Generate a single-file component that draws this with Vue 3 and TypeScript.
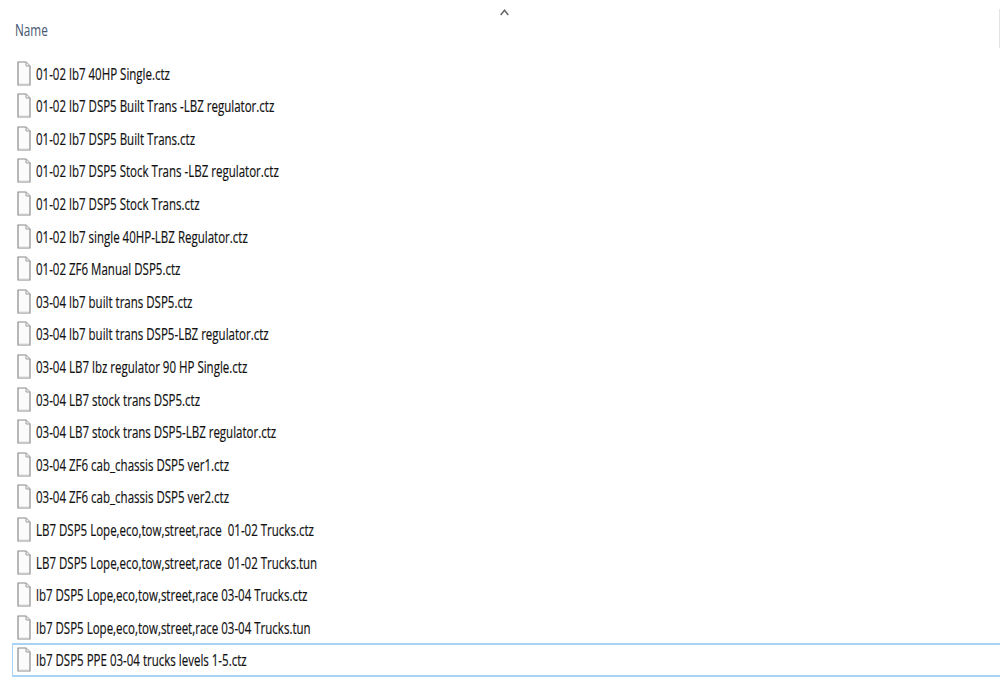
<script setup lang="ts">
const files: string[] = [
  '01-02 lb7 40HP Single.ctz',
  '01-02 lb7 DSP5 Built Trans -LBZ regulator.ctz',
  '01-02 lb7 DSP5 Built Trans.ctz',
  '01-02 lb7 DSP5 Stock Trans -LBZ regulator.ctz',
  '01-02 lb7 DSP5 Stock Trans.ctz',
  '01-02 lb7 single 40HP-LBZ Regulator.ctz',
  '01-02 ZF6 Manual DSP5.ctz',
  '03-04 lb7 built trans DSP5.ctz',
  '03-04 lb7 built trans DSP5-LBZ regulator.ctz',
  '03-04 LB7 lbz regulator 90 HP Single.ctz',
  '03-04 LB7 stock trans DSP5.ctz',
  '03-04 LB7 stock trans DSP5-LBZ regulator.ctz',
  '03-04 ZF6 cab_chassis DSP5 ver1.ctz',
  '03-04 ZF6 cab_chassis DSP5 ver2.ctz',
  'LB7 DSP5 Lope,eco,tow,street,race  01-02 Trucks.ctz',
  'LB7 DSP5 Lope,eco,tow,street,race  01-02 Trucks.tun',
  'lb7 DSP5 Lope,eco,tow,street,race 03-04 Trucks.ctz',
  'lb7 DSP5 Lope,eco,tow,street,race 03-04 Trucks.tun',
  'lb7 DSP5 PPE 03-04 trucks levels 1-5.ctz',
]
</script>

<template>
  <div class="page">
    <div class="edge"></div>
    <header class="head">
      <span class="name">Name</span>
      <svg class="sort" width="9" height="7" viewBox="0 0 9 7" aria-hidden="true">
        <path d="M0.7 6 L4.5 1.2 L8.3 6" fill="none" stroke="#666" stroke-width="1.5" />
      </svg>
    </header>
    <ul class="list">
      <li
        v-for="(file, i) in files"
        :key="file"
        class="row"
        :class="{ selected: i === files.length - 1 }"
      >
        <svg class="icon" width="14" height="25" viewBox="0 0 14 25" aria-hidden="true">
          <path d="M1 1 H9 L13 5 V24 H1 Z" fill="#fbfbfb" stroke="#8a8a8a" stroke-width="1.2" />
          <path d="M9 1 V5 H13" fill="#ededed" stroke="#a0a0a0" stroke-width="1" />
          <path d="M1.8 23 H12.2" stroke="#d6d6d6" stroke-width="1" />
        </svg>
        <span class="label">{{ file }}</span>
      </li>
    </ul>
  </div>
</template>

<style>
html, body { margin: 0; background: #fff; }
</style>

<style scoped>
.page {
  position: relative;
  width: 1000px;
  height: 700px;
  overflow: hidden;
  background: #fff;
  font-family: "Open Sans", "Noto Sans", sans-serif;
}
.edge {
  position: absolute;
  right: 0;
  top: 9px;
  width: 1px;
  height: 39px;
  background: #e4e4e4;
}
.head {
  position: relative;
  height: 56.8px;
  box-sizing: border-box;
  padding: 19px 0 0 15px;
}
.name {
  display: inline-block;
  font-size: 17px;
  line-height: 22px;
  color: #44586f;
  transform: scaleX(0.69);
  transform-origin: left center;
}
.sort {
  position: absolute;
  left: 500px;
  top: 9px;
}
.list {
  list-style: none;
  margin: 0;
  padding: 0;
}
.row {
  display: flex;
  align-items: center;
  height: 32.6px;
  padding-left: 17px;
  gap: 5px;
  white-space: pre;
}
.icon { flex: none; }
.label {
  display: inline-block;
  font-size: 17px;
  color: #111;
  -webkit-text-stroke: 0.2px #111;
  transform: scaleX(0.677);
  transform-origin: left center;
}
.selected {
  margin-left: 12px;
  padding-left: 4px;
  padding-bottom: 2px;
  height: 28px;
  border: 2px solid #a8d3f5;
  border-right: 0;
  border-left-width: 1px;
}
</style>
